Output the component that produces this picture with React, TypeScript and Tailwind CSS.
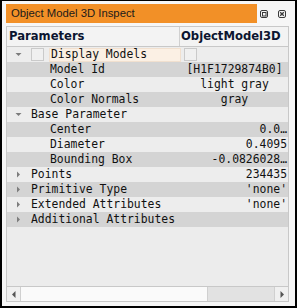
import React from "react";

type Row = {
  name: string;
  value?: string;
  align?: "center" | "right";
  level: 0 | 1;
  arrow?: "down" | "right";
  special?: boolean;
};

const rows: Row[] = [
  { name: "Display Models", level: 0, arrow: "down", special: true },
  { name: "Model Id", value: "[H1F1729874B0]", align: "center", level: 1 },
  { name: "Color", value: "light gray", align: "center", level: 1 },
  { name: "Color Normals", value: "gray", align: "center", level: 1 },
  { name: "Base Parameter", level: 0, arrow: "down" },
  { name: "Center", value: "0.0…", align: "right", level: 1 },
  { name: "Diameter", value: "0.4095", align: "right", level: 1 },
  { name: "Bounding Box", value: "-0.0826028…", align: "right", level: 1 },
  { name: "Points", value: "234435", align: "right", level: 0, arrow: "right" },
  { name: "Primitive Type", value: "'none'", align: "right", level: 0, arrow: "right" },
  { name: "Extended Attributes", value: "'none'", align: "right", level: 0, arrow: "right" },
  { name: "Additional Attributes", level: 0, arrow: "right" },
];

function Arrow({ dir }: { dir: "down" | "right" }) {
  if (dir === "down")
    return (
      <svg width="7" height="5" viewBox="0 0 7 5" className="block">
        <path d="M0.5 1 L6.5 1 L3.5 4 Z" fill="#7c7c7c" />
      </svg>
    );
  return (
    <svg width="5" height="7" viewBox="0 0 5 7" className="block ml-[1px]">
      <path d="M1 0.5 L4 3.5 L1 6.5 Z" fill="#7c7c7c" />
    </svg>
  );
}

export default function App() {
  const mono = { fontFamily: '"DejaVu Sans Mono", monospace' };
  return (
    <div className="w-[297px] h-[308px] bg-[#f6f6f6] border-t border-l-2 border-r-2 border-b-2 border-black flex flex-col pl-[4px] pr-[6px] pt-[3px] pb-[4px] overflow-hidden">
      {/* Title bar */}
      <div className="h-[19px] flex shrink-0">
        <div
          className="flex-1 bg-[#f29027] flex items-center pl-[5px] text-[11.3px] text-[#1a1a1a]"
          style={{ fontFamily: '"Liberation Sans", Arial, sans-serif' }}
        >
          Object Model 3D Inspect
        </div>
        <div className="w-[32px] flex items-center">
          <svg width="8" height="8" viewBox="0 0 8 8" className="ml-[3px]">
            <rect x="0.5" y="0.5" width="7" height="7" rx="1.5" fill="none" stroke="#3a3a3a" />
            <rect x="2.5" y="2.5" width="3.5" height="3.5" fill="none" stroke="#3a3a3a" />
          </svg>
          <svg width="8" height="8" viewBox="0 0 8 8" className="ml-[10px]">
            <rect x="0.5" y="0.5" width="7" height="7" rx="1.5" fill="none" stroke="#3a3a3a" />
            <path d="M2.2 2.2 L5.8 5.8 M5.8 2.2 L2.2 5.8" stroke="#3a3a3a" strokeWidth="1.3" />
          </svg>
        </div>
      </div>

      {/* Table */}
      <div className="mt-[3px] flex-1 border border-[#c8c8c8] bg-[#ececec] flex flex-col">
        <div
          className="h-[20px] flex bg-[#f3f3f3] border-b border-[#c8c8c8] shrink-0 text-[11.6px] font-bold text-[#0b1530]"
          style={{ fontFamily: '"DejaVu Sans", Verdana, sans-serif' }}
        >
          <div className="w-[173px] border-r border-[#d0d0d0] flex items-center pl-[2px]">Parameters</div>
          <div className="flex-1 flex items-center pl-[1px]">ObjectModel3D</div>
        </div>
        <div className="flex flex-col text-[11.4px] text-[#111]" style={mono}>
          {rows.map((r, i) => (
            <div
              key={r.name}
              className={`h-[15px] flex items-center relative ${i % 2 === 1 ? "bg-[#d4d4d4]" : "bg-[#ededed]"}`}
            >
              <div className="w-[174px] flex items-center h-full shrink-0">
                {r.level === 0 ? (
                  <>
                    <div className="w-[23px] flex justify-start pl-[8px]">
                      {r.arrow && <Arrow dir={r.arrow} />}
                    </div>
                    {r.special ? (
                      <>
                        <div className="w-[13px] h-[13px] border border-[#cacaca] bg-[#f0f0f0] ml-[1px]" />
                        <div className="ml-[5px] flex-1 h-[14px] bg-[#fbf0e4] border border-[#f1e0cf] flex items-center pl-[1px]">
                          {r.name}
                        </div>
                      </>
                    ) : (
                      <span className="whitespace-nowrap pl-[1px]">{r.name}</span>
                    )}
                  </>
                ) : (
                  <span className="whitespace-nowrap pl-[43px]">{r.name}</span>
                )}
              </div>
              <div
                className={`flex-1 flex items-center h-full whitespace-nowrap ${
                  r.align === "right" ? "justify-end pr-[1px]" : "justify-center"
                }`}
              >
                {r.special ? (
                  <div className="w-[13px] h-[13px] border border-[#cacaca] bg-[#f0f0f0] ml-[3px] mr-auto" />
                ) : (
                  r.value
                )}
              </div>
            </div>
          ))}
        </div>
        <div className="flex-1" />
        {/* Scrollbar */}
        <div className="h-[15px] flex border-t border-[#c8c8c8] shrink-0">
          <div className="w-[14px] border-r border-[#d0d0d0] bg-[#f0f0f0] flex items-center justify-center">
            <svg width="4" height="7" viewBox="0 0 4 7">
              <path d="M3.5 0 L0 3.5 L3.5 7 Z" fill="#555" />
            </svg>
          </div>
          <div className="w-[187px] bg-[#fafafa] border-r border-[#d0d0d0]" />
          <div className="flex-1 bg-[#e2e2e2] border-r border-[#d0d0d0]" />
          <div className="w-[13px] bg-[#f0f0f0] flex items-center justify-center">
            <svg width="4" height="7" viewBox="0 0 4 7">
              <path d="M0.5 0 L4 3.5 L0.5 7 Z" fill="#555" />
            </svg>
          </div>
        </div>
      </div>
    </div>
  );
}
